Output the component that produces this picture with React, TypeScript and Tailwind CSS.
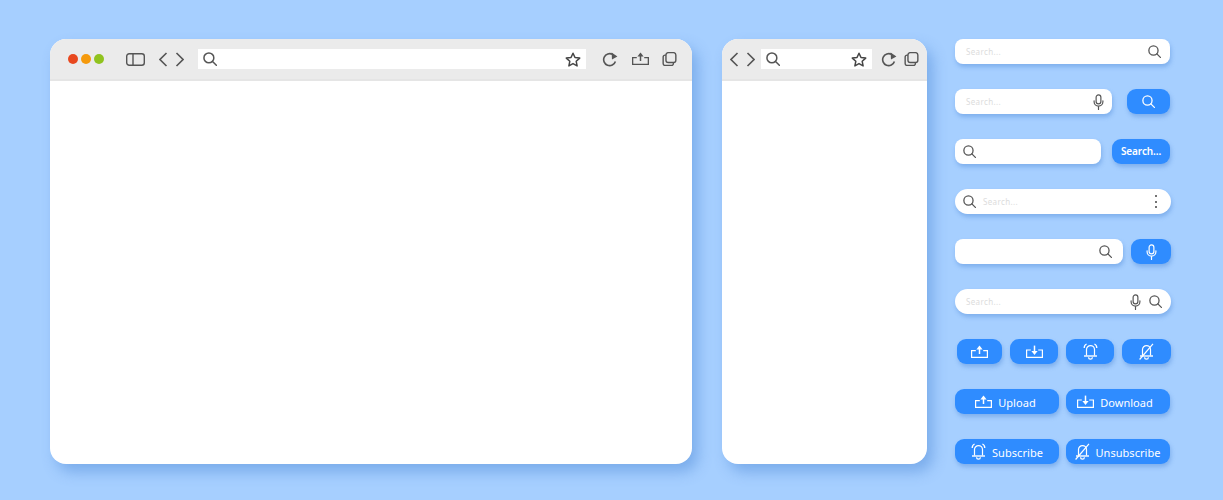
import React from 'react';

const dark = '#555555';

function SearchIcon({ size = 13, color = dark, width = 1.5 }: { size?: number; color?: string; width?: number }) {
    return (
        <svg width={size} height={size} viewBox="0 0 15 15" fill="none" stroke={color} strokeWidth={width} className="shrink-0">
            <circle cx="6.3" cy="6.3" r="5.3" />
            <path d="M10.2 10.2 14.3 14.3" strokeLinecap="round" />
        </svg>
    );
}

function MicIcon({ color = dark }: { color?: string }) {
    return (
        <svg width="11" height="16" viewBox="0 0 12 17" fill="none" stroke={color} strokeWidth="1.3" className="shrink-0">
            <rect x="3.4" y="0.8" width="5.2" height="9.8" rx="2.6" />
            <path d="M1.2 7.2v1a4.8 4.8 0 0 0 9.6 0v-1M6 13v3.6" strokeLinecap="round" />
        </svg>
    );
}

function UploadIcon({ w = 17, color = 'white', stroke = 1.2 }: { w?: number; color?: string; stroke?: number }) {
    return (
        <svg width={w} height={(w * 13) / 17} viewBox="0 0 17 13" fill="none" stroke={color} strokeWidth={stroke} className="shrink-0">
            <path d="M4.8 5.6H0.6v6.8h15.8V5.6h-4.2" />
            <path d="M8.5 9V2" strokeWidth="1.5" />
            <path d="M5.4 4.4 8.5 0.6l3.1 3.8z" fill={color} stroke="none" />
        </svg>
    );
}

function DownloadIcon({ w = 17 }: { w?: number }) {
    return (
        <svg width={w} height={(w * 13) / 17} viewBox="0 0 17 13" fill="none" stroke="white" strokeWidth="1.2" className="shrink-0">
            <path d="M4.8 5H0.6v7.4h15.8V5h-4.2" />
            <path d="M8.5 0.6v7" strokeWidth="1.5" />
            <path d="M5.4 6 8.5 9.9 11.6 6z" fill="white" stroke="none" />
        </svg>
    );
}

function BellIcon({ muted = false }: { muted?: boolean }) {
    return (
        <svg width="15" height="17" viewBox="0 0 15 17" fill="none" stroke="white" strokeWidth="1.2" className="shrink-0">
            <path d="M3.5 12.5V6.6a4 4 0 0 1 8 0v5.9" />
            <path d="M1 13h13" strokeWidth="1.4" />
            <path d="M5.6 14.3a1.9 1.9 0 0 0 3.8 0" />
            {!muted && <path d="M3.6 1C2 1.6 1.2 3 1.2 5M11.4 1c1.6.6 2.4 2 2.4 4" strokeWidth="1.3" />}
            {muted && <path d="M0.6 16.5 14 0.8" />}
        </svg>
    );
}

function WindowChrome({ wide }: { wide: boolean }) {
    return (
        <div className="h-[42px] shrink-0 flex items-center bg-[#ebebeb] border-b-2 border-[#e5e5e5] rounded-t-[16px]">
            {wide && (
                <>
                    <div className="flex gap-[3px] ml-[18px]">
                        <span className="w-[10px] h-[10px] rounded-full bg-[#e8481f]" />
                        <span className="w-[10px] h-[10px] rounded-full bg-[#f59a0c]" />
                        <span className="w-[10px] h-[10px] rounded-full bg-[#90c31f]" />
                    </div>
                    <svg width="19" height="13" viewBox="0 0 19 13" fill="none" stroke={dark} strokeWidth="1.4" className="ml-[22px]">
                        <rect x="0.7" y="0.7" width="17.6" height="11.6" rx="2.5" />
                        <path d="M7 1v11" />
                    </svg>
                </>
            )}
            <svg width="25" height="15" viewBox="0 0 25 15" fill="none" stroke={dark} strokeWidth="1.6" className={wide ? 'ml-[14px]' : 'ml-[8px]'}>
                <path d="M7.5 1 1 7.5 7.5 14M17.5 1 24 7.5 17.5 14" />
            </svg>
            <div className={`h-[20px] bg-white flex items-center justify-between pl-[5px] pr-[5px] ${wide ? 'ml-[14px] w-[388px]' : 'ml-[6px] w-[111px]'}`}>
                <SearchIcon size={14} width={1.6} />
                <svg width="16" height="15" viewBox="0 0 16 15" fill="none" stroke="#444444" strokeWidth="1.5" strokeLinejoin="round">
                    <path d="M8 1.2 10 5.5l4.7.6-3.5 3.2.9 4.6L8 11.6l-4.1 2.3.9-4.6L1.3 6.1 6 5.5z" />
                </svg>
            </div>
            <svg width="16" height="15" viewBox="0 0 16 15" fill="none" stroke={dark} strokeWidth="1.6" className={wide ? 'ml-[16px]' : 'ml-[9px]'}>
                <path d="M13.4 9.4A6 6 0 1 1 10.6 2.4" />
                <path d="M9.6 0.4 15.4 4.4 10 7.6z" fill={dark} stroke="none" />
            </svg>
            {wide && (
                <div className="ml-[14px] mb-[2px] flex">
                    <UploadIcon w={17} color={dark} stroke={1.4} />
                </div>
            )}
            <svg width="15" height="14" viewBox="0 0 15 15" fill="none" stroke={dark} strokeWidth="1.5" className={wide ? 'ml-[13px] mb-[1px]' : 'ml-[7px] mb-[1px]'}>
                <rect x="3.7" y="0.7" width="10.6" height="10.6" rx="2.5" />
                <path d="M3.7 3.4H2.7a2 2 0 0 0-2 2v7a2 2 0 0 0 2 2h7a2 2 0 0 0 2-2v-1" />
            </svg>
        </div>
    );
}

function Browser({ wide }: { wide: boolean }) {
    return (
        <div className={`h-[425px] flex flex-col bg-white rounded-[16px] shadow-[6px_8px_14px_rgba(70,130,210,0.45)] ${wide ? 'w-[642px]' : 'w-[205px]'}`}>
            <WindowChrome wide={wide} />
        </div>
    );
}

const fieldShadow = 'shadow-[1px_3px_4px_rgba(70,130,210,0.4)]';
const blueBtn = `h-[25px] bg-[#2f8cff] text-white flex items-center justify-center rounded-[9px] ${fieldShadow}`;

function Placeholder() {
    return <span className="text-[8px] tracking-[0.35px] text-[#dcdcdc]">Search...</span>;
}

function Field({ className, children }: { className: string; children: React.ReactNode }) {
    return <div className={`h-[25px] bg-white flex items-center ${fieldShadow} ${className}`}>{children}</div>;
}

function Controls() {
    return (
        <div className="w-[216px] flex flex-col gap-[25px] font-['Noto_Sans',sans-serif]">
            <Field className="w-[215px] rounded-[8px] pl-[11px] pr-[9px] justify-between">
                <Placeholder />
                <SearchIcon />
            </Field>
            <div className="flex justify-between w-[215px]">
                <Field className="w-[157px] rounded-[8px] pl-[11px] pr-[8px] justify-between">
                    <Placeholder />
                    <MicIcon />
                </Field>
                <div className={`${blueBtn} w-[43px]`}>
                    <SearchIcon color="white" />
                </div>
            </div>
            <div className="flex justify-between w-[215px]">
                <Field className="w-[146px] rounded-[8px] pl-[8px]">
                    <SearchIcon />
                </Field>
                <div className={`${blueBtn} w-[58px] text-[10px] font-semibold tracking-[-0.1px]`}>Search...</div>
            </div>
            <Field className="w-[216px] rounded-full pl-[8px] pr-[14px] justify-between">
                <div className="flex items-center gap-[7px]">
                    <SearchIcon />
                    <Placeholder />
                </div>
                <div className="flex flex-col gap-[3.5px]">
                    <span className="w-[2px] h-[2px] rounded-full bg-[#444444]" />
                    <span className="w-[2px] h-[2px] rounded-full bg-[#444444]" />
                    <span className="w-[2px] h-[2px] rounded-full bg-[#444444]" />
                </div>
            </Field>
            <div className="flex justify-between w-[216px]">
                <Field className="w-[168px] rounded-[8px] pr-[11px] justify-end">
                    <SearchIcon />
                </Field>
                <div className={`${blueBtn} w-[40px]`}>
                    <MicIcon color="white" />
                </div>
            </div>
            <Field className="w-[216px] rounded-full pl-[11px] pr-[9px]">
                <Placeholder />
                <div className="ml-auto flex items-center gap-[8px]">
                    <MicIcon />
                    <SearchIcon />
                </div>
            </Field>
            <div className="flex gap-[8px] pl-[2px] w-[216px]">
                <div className={`${blueBtn} w-[45px]`}>
                    <UploadIcon />
                </div>
                <div className={`${blueBtn} w-[48px]`}>
                    <DownloadIcon />
                </div>
                <div className={`${blueBtn} w-[48px]`}>
                    <BellIcon />
                </div>
                <div className={`${blueBtn} w-[49px]`}>
                    <BellIcon muted />
                </div>
            </div>
            <div className="flex gap-[7px] text-[11px] tracking-[0.05px]">
                <div className={`${blueBtn} w-[104px] gap-[6px] pr-[3px]`}>
                    <UploadIcon />
                    <span className="pt-[3px]">Upload</span>
                </div>
                <div className={`${blueBtn} w-[104px] gap-[6px] pr-[6px]`}>
                    <DownloadIcon />
                    <span className="pt-[3px]">Download</span>
                </div>
            </div>
            <div className="flex gap-[7px] text-[11px] tracking-[0.05px]">
                <div className={`${blueBtn} w-[104px] gap-[6px]`}>
                    <BellIcon />
                    <span className="pt-[3px]">Subscribe</span>
                </div>
                <div className={`${blueBtn} w-[104px] gap-[5px]`}>
                    <BellIcon muted />
                    <span className="pt-[3px]">Unsubscribe</span>
                </div>
            </div>
        </div>
    );
}

export default function App() {
    return (
        <div className="w-[1223px] h-[500px] overflow-hidden bg-[#a6cfff] flex items-start pl-[50px] pt-[39px]">
            <Browser wide />
            <div className="ml-[30px]">
                <Browser wide={false} />
            </div>
            <div className="ml-[28px]">
                <Controls />
            </div>
        </div>
    );
}
